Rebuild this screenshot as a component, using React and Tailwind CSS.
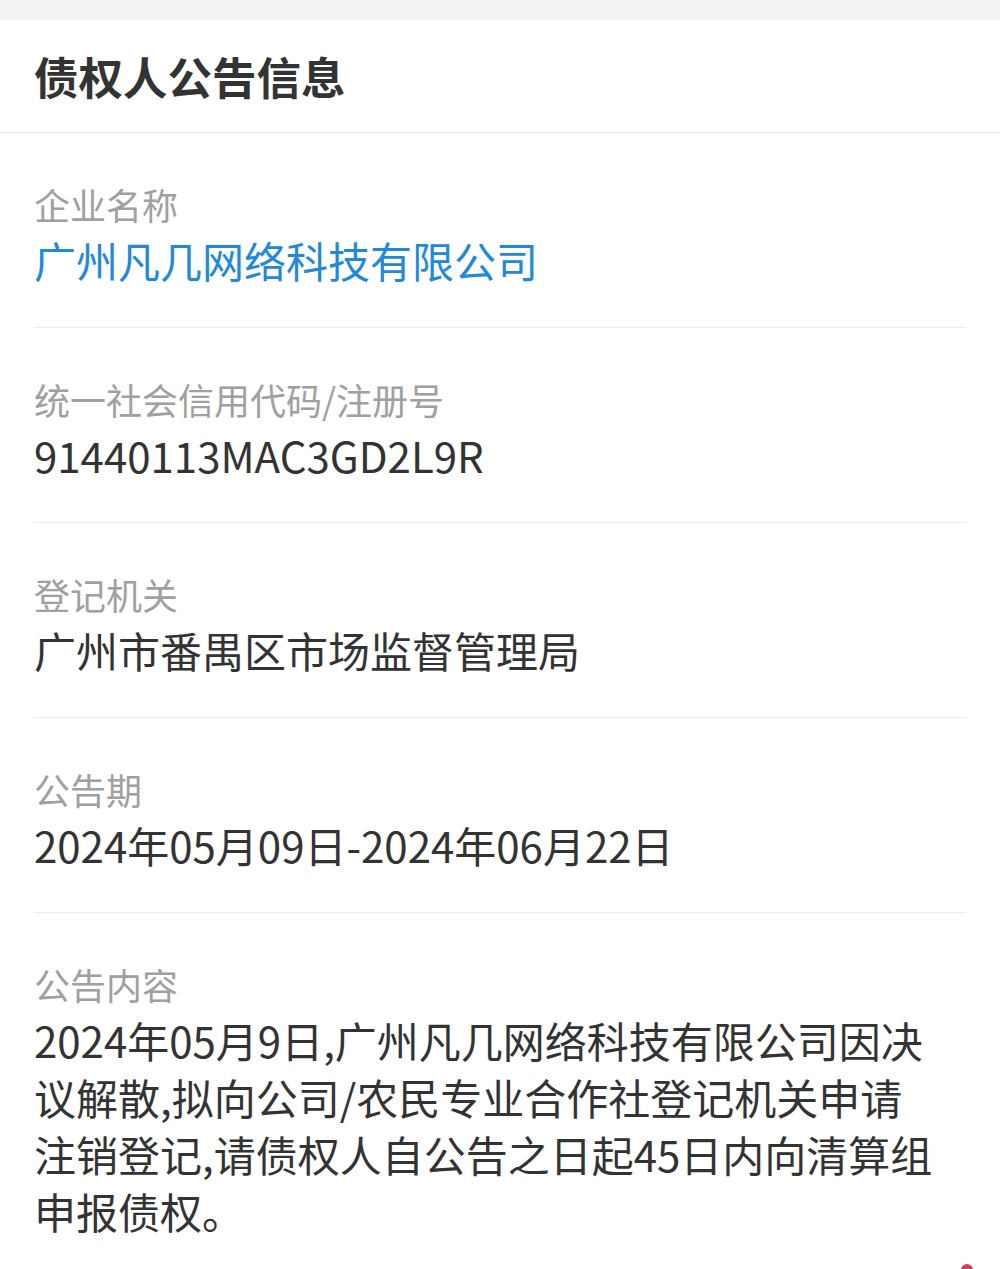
import React from 'react';

const items = [
  { label: '企业名称', value: '广州凡几网络科技有限公司', link: true },
  { label: '统一社会信用代码/注册号', value: '91440113MAC3GD2L9R' },
  { label: '登记机关', value: '广州市番禺区市场监督管理局' },
  { label: '公告期', value: '2024年05月09日-2024年06月22日' },
  {
    label: '公告内容',
    value:
      '2024年05月9日,广州凡几网络科技有限公司因决议解散,拟向公司/农民专业合作社登记机关申请注销登记,请债权人自公告之日起45日内向清算组申报债权。',
    last: true,
  },
];

const InfoRow = ({ label, value, link, last }) => (
  <div className={`pt-[44px] ${last ? 'pb-[30px]' : 'pb-[39px] border-b border-[#ececec]'}`}>
    <div className="text-[36px] leading-[54px] text-[#a0a0a0]">{label}</div>
    <div
      className={`max-w-[900px] text-[42px] leading-[57px] break-all ${
        link ? 'text-[#2189dc]' : 'text-[#333333]'
      }`}
    >
      {value}
    </div>
  </div>
);

export default function App() {
  return (
    <div
      className="relative h-[1269px] overflow-hidden bg-white"
      style={{ fontFamily: '"Noto Sans CJK SC", "Noto Sans", sans-serif' }}
    >
      {/* top gap */}
      <div className="h-[20px] bg-[#f2f2f2]" />

      {/* header */}
      <div className="flex h-[113px] items-center border-b border-[#e8e8e8] px-[34px]">
        <h1 className="text-[44.5px] font-bold text-[#333333]">债权人公告信息</h1>
      </div>

      {/* details */}
      <div className="mx-[34px]">
        {items.map((item, i) => (
          <InfoRow key={i} {...item} />
        ))}
      </div>

      {/* floating badge peeking from bottom */}
      <div className="absolute left-[961px] top-[1264px] h-[12px] w-[12px] rounded-full bg-[#d2405e]" />
    </div>
  );
}
